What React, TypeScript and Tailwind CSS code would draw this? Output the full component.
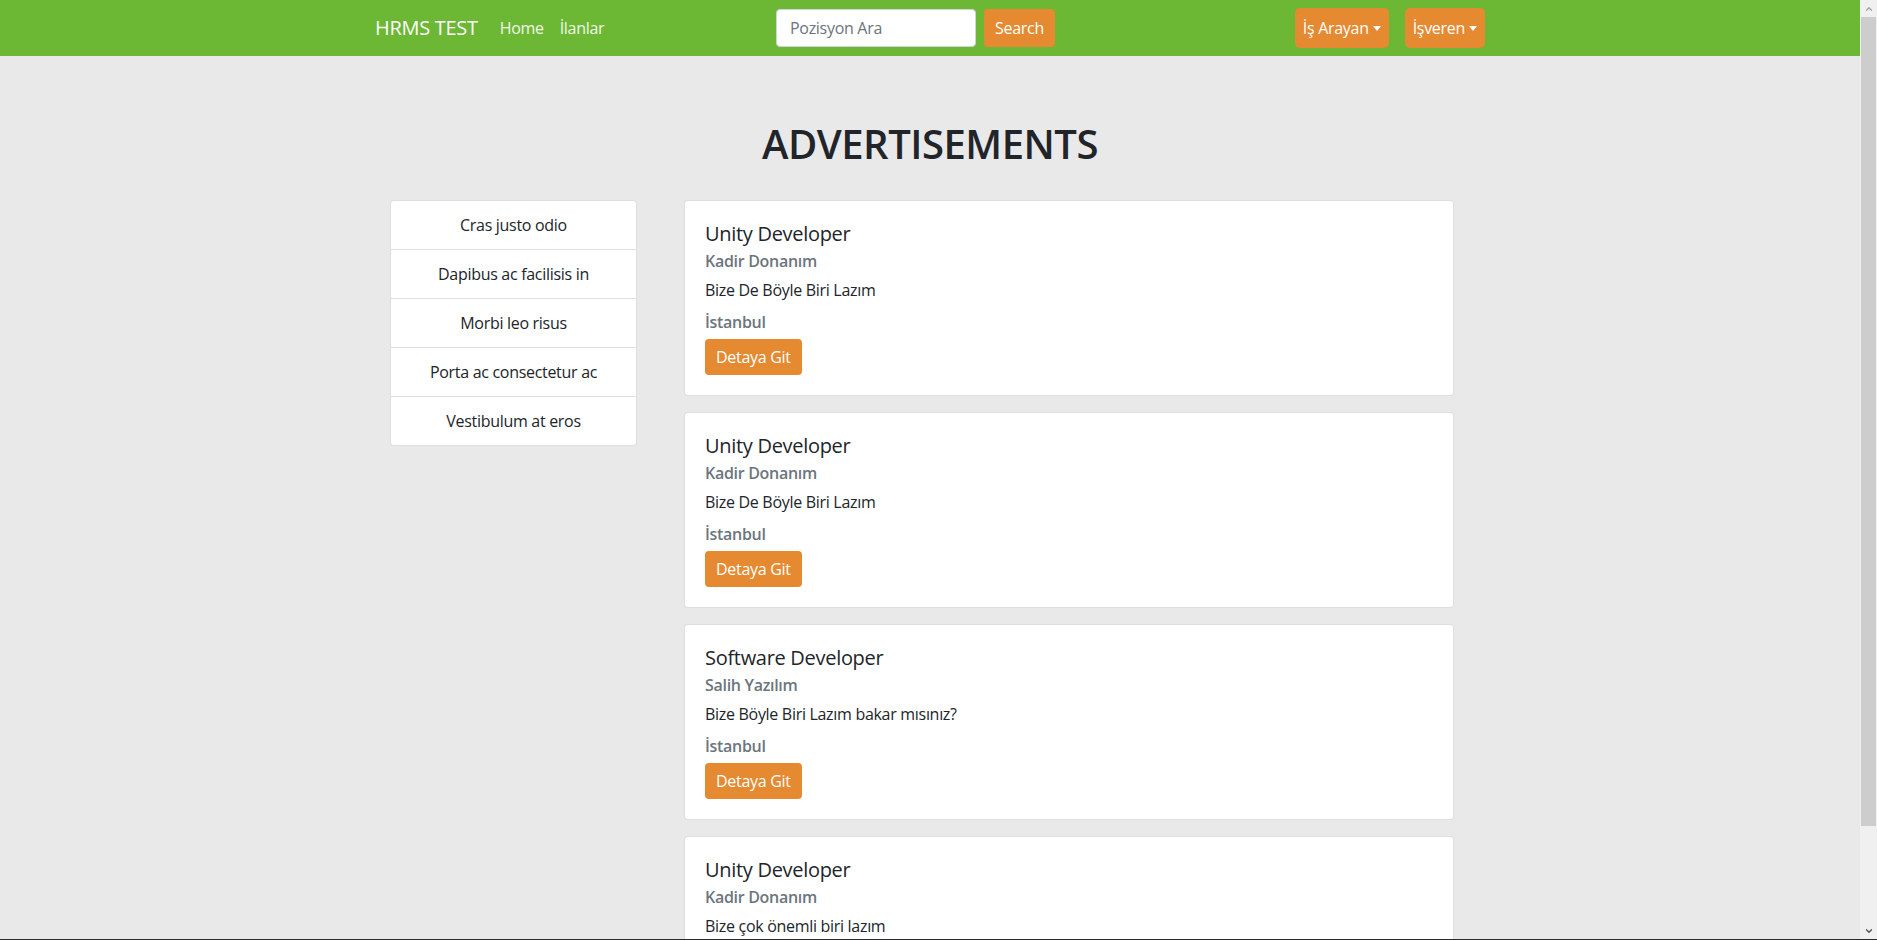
import { ChevronDown, ChevronUp } from 'lucide-react'

const menu = ['Cras justo odio', 'Dapibus ac facilisis in', 'Morbi leo risus', 'Porta ac consectetur ac', 'Vestibulum at eros']

const ads = [
  { title: 'Unity Developer', company: 'Kadir Donanım', text: 'Bize De Böyle Biri Lazım', city: 'İstanbul' },
  { title: 'Unity Developer', company: 'Kadir Donanım', text: 'Bize De Böyle Biri Lazım', city: 'İstanbul' },
  { title: 'Software Developer', company: 'Salih Yazılım', text: 'Bize Böyle Biri Lazım bakar mısınız?', city: 'İstanbul' },
  { title: 'Unity Developer', company: 'Kadir Donanım', text: 'Bize çok önemli biri lazım', city: 'İstanbul' },
]

function Caret() {
  return <span className="ml-[4px] inline-block w-0 h-0 border-x-[4px] border-x-transparent border-t-[5px] border-t-white align-middle" />
}

export default function App() {
  return (
    <div className="h-[940px] w-full flex flex-col overflow-hidden bg-[#e9e9e9] font-['Open_Sans','Noto_Sans',sans-serif] tracking-[-0.3px] text-[#212529]">
      <div className="flex flex-1 min-h-0">
        <div className="flex-1 min-w-0 overflow-hidden">
          {/* Navbar */}
          <nav className="h-[56px] bg-[#6cb733]">
            <div className="w-[1110px] mx-auto h-full flex items-center">
              <div className="w-[401px] flex items-center">
                <span className="text-[20px] text-white mr-[22px]">HRMS TEST</span>
                <a className="text-[16px] text-white/90 mr-[16px]">Home</a>
                <a className="text-[16px] text-white/90">İlanlar</a>
              </div>

              <div className="flex items-center gap-[8px]">
                <input
                  placeholder="Pozisyon Ara"
                  className="w-[200px] h-[38px] rounded-[4px] bg-white border border-[#ced4da] px-[13px] text-[16px] placeholder:text-[#6c757d] outline-none"
                />
                <button className="h-[38px] w-[71px] rounded-[4px] bg-[#e58a31] text-white text-[16px]">Search</button>
              </div>

              <div className="ml-auto flex items-center gap-[16px]">
                <button className="h-[40px] px-[8px] rounded-[5px] bg-[#e58a31] text-white text-[16px] flex items-center">
                  İş Arayan <Caret />
                </button>
                <button className="h-[40px] px-[8px] rounded-[5px] bg-[#e58a31] text-white text-[16px] flex items-center">
                  İşveren <Caret />
                </button>
              </div>
            </div>
          </nav>

          {/* Title */}
          <h1 className="mt-[63px] mb-[31px] text-center text-[40px] leading-[50px] font-semibold tracking-[-0.5px] text-[#212529]">
            ADVERTISEMENTS
          </h1>

          <div className="w-[1110px] mx-auto pl-[15px] flex items-start">
            {/* Side list */}
            <div className="w-[247px] bg-white border border-black/[0.125] rounded-[4px] overflow-hidden">
              {menu.map((m, i) => (
                <div
                  key={m}
                  className={`flex items-center justify-center text-[16px] ${i > 0 ? 'h-[49px] border-t border-black/[0.125]' : 'h-[48px]'}`}
                >
                  {m}
                </div>
              ))}
            </div>

            {/* Cards */}
            <div className="ml-[47px] w-[770px] flex flex-col gap-[16px]">
              {ads.map((a, i) => (
                <div key={i} className="bg-white border border-black/[0.125] rounded-[4px] px-5 pt-[21px] pb-5">
                  <div className="text-[20px] leading-6 font-medium mb-[5px]">{a.title}</div>
                  <div className="text-[16px] leading-5 font-semibold text-[#6c757d] mb-[7px]">{a.company}</div>
                  <p className="text-[16px] leading-6 mb-2">{a.text}</p>
                  <div className="text-[16px] leading-6 font-semibold text-[#6c757d] mb-[5px]">{a.city}</div>
                  <button className="h-[36px] px-[11px] rounded-[4px] bg-[#e58a31] text-white text-[16px]">Detaya Git</button>
                </div>
              ))}
            </div>
          </div>
        </div>

        {/* Scrollbar */}
        <div className="w-[17px] bg-[#f0f0f0] flex flex-col items-center">
          <div className="h-[17px] flex items-center justify-center text-[#a3a3a3]">
            <ChevronUp size={10} strokeWidth={3} />
          </div>
          <div className="w-[15px] h-[809px] bg-[#cdcdcd]" />
          <div className="flex-1" />
          <div className="h-[17px] flex items-center justify-center text-[#505050]">
            <ChevronDown size={10} strokeWidth={3} />
          </div>
        </div>
      </div>
      <div className="h-px bg-[#2b2b2b]" />
    </div>
  )
}
